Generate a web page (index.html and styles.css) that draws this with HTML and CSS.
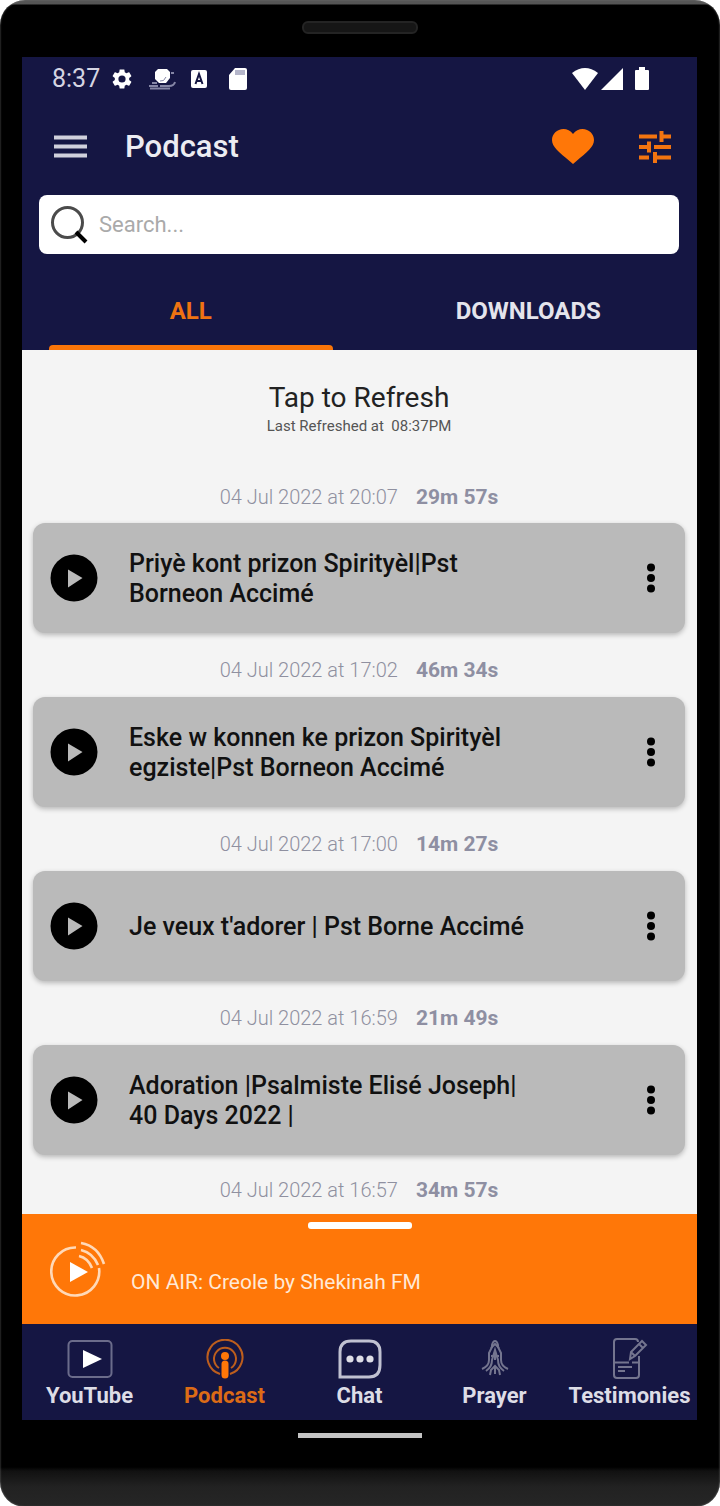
FILE: index.html
```html
<!DOCTYPE html>
<html lang="en">
<head>
<meta charset="utf-8">
<meta name="viewport" content="width=device-width, initial-scale=1">
<title>Podcast</title>
<link rel="stylesheet" href="styles.css">
</head>
<body>
<svg class="defs" aria-hidden="true">
  <symbol id="play" viewBox="0 0 48 48"><circle cx="24" cy="24" r="23.500" fill="#000"/><path d="M18 15.500v18L32.500 24z" fill="#bababa"/></symbol>
  <symbol id="more" viewBox="0 0 10 32"><circle cx="5" cy="5.500" r="4"/><circle cx="5" cy="16" r="4"/><circle cx="5" cy="26.500" r="4"/></symbol>
</svg>
<div class="phone">
  <div class="speaker"></div>
  <div class="screen">
    <header class="header">
      <div class="status">
        <div class="status-left">
          <span>8:37</span>
          <svg width="24" height="24" viewBox="0 0 24 24" fill="#fff"><path d="M19.140 12.940c.04-.3.060-.61.060-.94 0-.32-.02-.64-.07-.94l2.030-1.580c.18-.14.230-.41.120-.61l-1.920-3.320c-.12-.22-.37-.29-.59-.22l-2.390.96c-.5-.38-1.030-.7-1.620-.94l-.36-2.540c-.04-.24-.24-.41-.48-.41h-3.840c-.24 0-.43.170-.47.410l-.36 2.540c-.59.240-1.130.570-1.620.94l-2.390-.96c-.22-.08-.47 0-.59.220L2.740 8.870c-.12.210-.08.470.12.610l2.030 1.580c-.05.300-.09.630-.09.940s.02.640.07.940l-2.030 1.580c-.18.140-.23.410-.12.610l1.920 3.320c.12.220.37.290.59.220l2.390-.96c.5.380 1.030.700 1.620.94l.36 2.540c.05.240.24.410.48.410h3.840c.24 0 .44-.17.470-.41l.36-2.540c.59-.24 1.130-.56 1.620-.94l2.390.96c.22.080.47 0 .59-.22l1.920-3.320c.12-.22.070-.47-.12-.61l-2.010-1.580zM12 15.600a3.600 3.600 0 1 1 0-7.200 3.600 3.600 0 0 1 0 7.200z"/></svg>
          <svg class="gap-s" width="28" height="22" viewBox="0 0 28 22"><path d="M10 1h9l3 3v6l-4 5h-7l-4-4V4z" fill="#fff"/><path d="M12 13q4 1 6-4" fill="none" stroke="#8586a6"/><path d="M1 18h9M12 18h9q5 0 6-4M4 15h5M2 20.500h20M23 5h3" fill="none" stroke="#8586a6" stroke-width="2"/></svg>
          <svg class="gap-s" width="18" height="20" viewBox="0 0 18 20"><rect x="1" y="1" width="16" height="18" rx="2" fill="#fff"/><path d="M5.500 15 9 5l3.500 10M7 12h4" fill="none" stroke="#151643" stroke-width="2"/></svg>
          <svg class="gap-l" width="20" height="24" viewBox="0 0 20 24"><path d="M7 1h10q2 0 2 2v18q0 2-2 2H3q-2 0-2-2V8z" fill="#fff"/><path d="M7 3h10v5H7z" fill="#b5b6ca"/></svg>
        </div>
        <div class="status-right">
          <svg width="26" height="24" viewBox="0 0 26 24"><path d="M0 6q13-10 26 0L13 23z" fill="#fff"/></svg>
          <svg width="24" height="24" viewBox="0 0 24 24"><path d="M23 1v22H1z" fill="#fff"/></svg>
          <svg class="gap-s" width="16" height="24" viewBox="0 0 16 24"><path d="M5 0h6v3h3q1 0 1 1v18q0 1-1 1H2q-1 0-1-1V4q0-1 1-1h3z" fill="#fff"/></svg>
        </div>
      </div>
      <div class="appbar">
        <button class="icon-btn" aria-label="Menu"><svg width="33" height="26" viewBox="0 0 33 26"><path d="M0 3.500h33M0 12.500h33M0 21.500h33" stroke="#d0d0dc" stroke-width="4"/></svg></button>
        <h1>Podcast</h1>
        <button class="icon-btn" aria-label="Favourites"><svg width="42" height="36" viewBox="0 0 42 36"><path d="M21 35 17.500 32C7 23 0 18 0 11 0 5 5 0 11.500 0 15 0 18.500 1.500 21 5 23.500 1.500 27 0 30.500 0 37 0 42 5 42 11c0 7-7 12-17.500 21z" fill="#ff7708"/></svg></button>
        <button class="icon-btn" aria-label="Filters"><svg width="32" height="32" viewBox="0 0 32 32" fill="none" stroke="#f37410" stroke-width="4"><path d="M0 5.500h18M22 5.500h10M0 16h8M15 16h17M0 26.500h10M17 26.500h15"/><path d="M22.500 0v11M10 10.500v11M16 21v11"/></svg></button>
      </div>
      <label class="search">
        <svg width="38" height="38" viewBox="0 0 38 38" fill="none"><circle cx="16.500" cy="16.500" r="15" stroke="#4b4b4b" stroke-width="3"/><path d="m25 26 10 10" stroke="#000" stroke-width="4"/></svg>
        <input type="search" placeholder="Search..." aria-label="Search">
      </label>
      <div class="tabs" role="tablist">
        <button class="tab tab-on" role="tab" aria-selected="true">ALL</button>
        <button class="tab" role="tab" aria-selected="false">DOWNLOADS</button>
      </div>
    </header>
    <main class="list">
      <button class="refresh"><span class="refresh-main">Tap to Refresh</span><span class="refresh-sub">Last Refreshed at&nbsp; 08:37PM</span></button>
      <p class="meta"><span>04 Jul 2022 at 20:07</span><b>29m 57s</b></p>
      <article class="card">
        <button class="icon-btn" aria-label="Play"><svg width="48" height="48"><use href="#play"/></svg></button>
        <h2>Priyè kont prizon Spirityèl|Pst<br>Borneon Accimé</h2>
        <button class="icon-btn" aria-label="More"><svg width="10" height="32"><use href="#more"/></svg></button>
      </article>
      <p class="meta"><span>04 Jul 2022 at 17:02</span><b>46m 34s</b></p>
      <article class="card">
        <button class="icon-btn" aria-label="Play"><svg width="48" height="48"><use href="#play"/></svg></button>
        <h2>Eske w konnen ke prizon Spirityèl<br>egziste|Pst Borneon Accimé</h2>
        <button class="icon-btn" aria-label="More"><svg width="10" height="32"><use href="#more"/></svg></button>
      </article>
      <p class="meta"><span>04 Jul 2022 at 17:00</span><b>14m 27s</b></p>
      <article class="card">
        <button class="icon-btn" aria-label="Play"><svg width="48" height="48"><use href="#play"/></svg></button>
        <h2>Je veux t'adorer | Pst Borne Accimé</h2>
        <button class="icon-btn" aria-label="More"><svg width="10" height="32"><use href="#more"/></svg></button>
      </article>
      <p class="meta"><span>04 Jul 2022 at 16:59</span><b>21m 49s</b></p>
      <article class="card">
        <button class="icon-btn" aria-label="Play"><svg width="48" height="48"><use href="#play"/></svg></button>
        <h2>Adoration |Psalmiste Elisé Joseph|<br>40 Days 2022 |</h2>
        <button class="icon-btn" aria-label="More"><svg width="10" height="32"><use href="#more"/></svg></button>
      </article>
      <p class="meta"><span>04 Jul 2022 at 16:57</span><b>34m 57s</b></p>
    </main>
    <section class="player">
      <div class="grip"></div>
      <div class="player-row">
        <button class="icon-btn" aria-label="Play live"><svg width="56" height="56" viewBox="0 0 56 56" fill="none" stroke="#ffd9b8" stroke-width="2.600"><path d="M26 6.500A24 24 0 1 0 49 27"/><path d="M20 21v20l18-10z" fill="#fff" stroke="none"/><path d="M31 2Q48 5 54 23M31 9q12 3 17 15M29 15q9 2 13 12"/></svg></button>
        <span>ON AIR: Creole by Shekinah FM</span>
      </div>
    </section>
    <nav class="nav">
      <a class="nav-item" href="#youtube"><svg width="46" height="40" viewBox="0 0 46 40"><rect x="1.500" y="2" width="43" height="36" rx="4" fill="none" stroke="#6b6c8b" stroke-width="2"/><path d="M16 11v18l19-9z" fill="#fff"/></svg>YouTube</a>
      <a class="nav-item nav-on" href="#podcast"><svg width="40" height="40" viewBox="0 0 40 40" fill="none" stroke="#bd5e1d" stroke-width="2"><path d="M15 35A17.500 17.500 0 1 1 25 35"/><path d="M14 29a11 11 0 1 1 12 0" /><circle cx="20" cy="17" r="4" fill="#ff7708" stroke="none"/><path d="M20 25v11" stroke="#ff7708" stroke-width="7" stroke-linecap="round"/></svg>Podcast</a>
      <a class="nav-item" href="#chat"><svg width="44" height="40" viewBox="0 0 44 40"><path d="M2 38V13Q2 2 13 2H31Q42 2 42 13V26Q42 38 31 38z" fill="none" stroke="#c0c1d1" stroke-width="3"/><g fill="#dddde6"><circle cx="12" cy="20" r="3.600"/><circle cx="22" cy="20" r="3.600"/><circle cx="32" cy="20" r="3.600"/></g></svg>Chat</a>
      <a class="nav-item" href="#prayer"><svg width="28" height="40" viewBox="0 0 28 40" fill="none" stroke="#74758f" stroke-width="2"><path d="M1 30q7-3 7-9v-7l3-6V6q1-4 3-4t3 4v2l3 6v7q0 6 7 9"/><path d="M5 32q6-4 6-11l3-10 3 10q0 7 6 11M9 36l1-5 4-4 4 4 1 5M14 28v7M10 9l4-4 4 4M10 17h8M14 11v10"/></svg>Prayer</a>
      <a class="nav-item" href="#testimonies"><svg width="36" height="42" viewBox="0 0 36 42" fill="none" stroke="#74758f" stroke-width="2"><path d="M27 18v19q0 3-3 3H5q-3 0-3-3V4q0-3 3-3h18q3 0 3 3M3 24.500h14M20 24.500h7M6 29h14M6 33h7"/><path d="m18 21 1-7L30 3l4 4-11 11zM27 6l4 4M19 14l4 4"/></svg>Testimonies</a>
    </nav>
  </div>
  <div class="home"></div>
</div>
</body>
</html>
```
FILE: styles.css
```css
* { box-sizing: border-box; }
body { margin: 0; background: #fff; font-family: Roboto, "Liberation Sans", sans-serif; color: #111; }
h1, h2, p { margin: 0; }
button { border: 0; padding: 0; background: none; font: inherit; color: inherit; }
svg { display: block; flex: none; }
.defs { position: absolute; width: 0; height: 0; }

.phone {
  display: flex; flex-direction: column; min-height: 100vh;
  padding: 0 23px 0 22px;
  border-radius: 25px;
  background: linear-gradient(to top, #262626 0, #222 20px, #111 36px, #000 40px, #000 calc(100% - 5px), #555 calc(100% - 4px), #555 100%);
  box-shadow: inset 0 0 2px #777;
}
.speaker { width: 116px; height: 13px; margin: 21px auto 23px; border-radius: 6px; background: #161616; border: 2px solid #242424; }
.screen { flex: 1; display: flex; flex-direction: column; background: #f4f4f4; }
.home { width: 124px; height: 5px; margin: 13px auto 69px; background: #c4c4c4; }

.header { background: #151643; color: #fff; }
.status { display: flex; justify-content: space-between; height: 43px; padding: 0 47px 0 30px; font-size: 25px; color: #d5d5e2; }
.status-left, .status-right { display: flex; align-items: center; }
.status-left span { margin-right: 10px; }
.status-right { gap: 2px; }
.gap-s { margin-left: 14px; }
.gap-l { margin-left: 20px; }
.status-right .gap-s { margin-left: 8px; }
.appbar { display: flex; align-items: center; height: 95px; padding: 0 26px 2px 32px; }
.appbar h1 { flex: 1; margin-left: 38px; font-size: 31px; font-weight: 500; color: #ececf2; }
.appbar .icon-btn + .icon-btn { margin-left: 45px; }
.search { display: flex; align-items: center; gap: 10px; height: 59px; margin: 0 18px 0 17px; padding: 0 12px; border-radius: 8px; background: #fff; }
.search input { flex: 1; min-width: 0; border: 0; outline: 0; padding: 0; background: none; font: 22px Roboto, "Liberation Sans", sans-serif; }
.search input::placeholder { color: #aaa; opacity: 1; }
.tabs { display: flex; height: 96px; }
.tab { flex: 1; display: grid; grid-template-rows: 1fr 5px; justify-items: center; align-items: center; padding-top: 22px; font-size: 24px; font-weight: 700; color: #e4e4ec; }
.tab::after { content: ""; width: 84%; height: 5px; border-radius: 4px 4px 0 0; }
.tab-on { color: #ee7312; }
.tab-on::after { background: #fa7508; }

.list { flex: 1; padding: 0 12px 0 11px; }
.refresh { display: flex; flex-direction: column; align-items: center; width: 100%; height: 118px; padding-top: 30px; }
.refresh-main { font-size: 28px; line-height: 36px; color: #222; }
.refresh-sub { font-size: 15px; line-height: 20px; color: #555; }
.meta { display: flex; justify-content: center; align-items: center; gap: 18px; height: 64px; padding-top: 10px; font-size: 21px; line-height: 30px; }
.meta span { font-size: 20px; font-weight: 300; color: #8f90a0; }
.meta b { font-weight: 700; color: #8e8fa2; }
.refresh + .meta { height: 55px; padding-top: 2px; }
.meta:last-child { height: 59px; }
.card { display: flex; align-items: center; height: 110px; padding: 0 29px 0 17px; border-radius: 12px; background: #bababa; box-shadow: 0 2px 5px rgba(0, 0, 0, .25); }
.card h2 { flex: 1; margin-left: 31px; padding-top: 2px; font-size: 25px; line-height: 30px; font-weight: 500; }

.player { height: 110px; padding-top: 8px; background: #ff7708; color: #ffe9d6; }
.grip { width: 104px; height: 7px; margin: 0 auto; border-radius: 3px; background: #fff; }
.player-row { display: flex; align-items: center; gap: 25px; padding: 12px 28px 0; font-size: 21px; }
.player-row span { padding-top: 25px; }

.nav { display: grid; grid-template-columns: repeat(5, 1fr); height: 96px; padding-top: 14px; background: #151643; }
.nav-item { display: grid; grid-template-rows: 42px 30px; justify-items: center; align-items: center; align-content: start; text-decoration: none; font-size: 22px; font-weight: 700; color: #dddde6; }
.nav-on { color: #dc6b16; }
```
